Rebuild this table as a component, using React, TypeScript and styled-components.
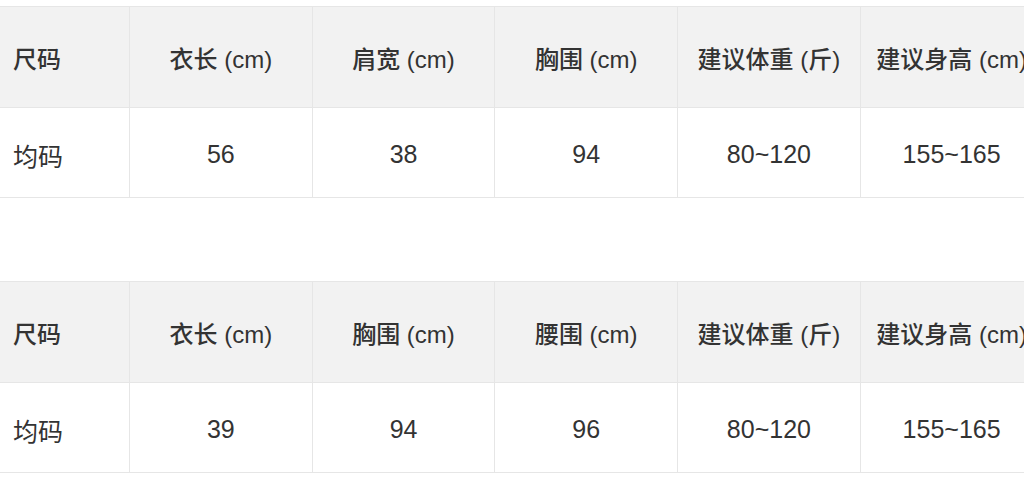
import styled, { createGlobalStyle } from 'styled-components';

const GlobalStyle = createGlobalStyle`
  html, body {
    margin: 0;
    padding: 0;
    background: #ffffff;
    overflow: hidden;
  }
  body {
    font-family: "Liberation Sans", "Noto Sans CJK SC", sans-serif;
    color: #333333;
  }
`;

const tables = [
  {
    headers: ['尺码', '衣长 (cm)', '肩宽 (cm)', '胸围 (cm)', '建议体重 (斤)', '建议身高 (cm)'],
    values: ['均码', '56', '38', '94', '80~120', '155~165'],
  },
  {
    headers: ['尺码', '衣长 (cm)', '胸围 (cm)', '腰围 (cm)', '建议体重 (斤)', '建议身高 (cm)'],
    values: ['均码', '39', '94', '96', '80~120', '155~165'],
  },
];

const Page = styled.div`
  display: flex;
  flex-direction: column;
  gap: 83px;
  padding-top: 6px;
  width: 1044px;
`;

const SizeTable = styled.div`
  display: grid;
  grid-template-columns: 130px repeat(5, 182.7px);
  border-top: 1px solid #e6e6e6;
`;

const Cell = styled.div<{ $head?: boolean; $first?: boolean }>`
  box-sizing: border-box;
  display: flex;
  align-items: center;
  justify-content: ${(p) => (p.$first ? 'flex-start' : 'center')};
  padding-left: ${(p) => (p.$first ? '13px' : '0')};
  padding-top: ${(p) => (p.$head ? '0' : '4px')};
  height: ${(p) => (p.$head ? '101px' : '90px')};
  background: ${(p) => (p.$head ? '#f2f2f2' : '#ffffff')};
  border-right: 1px solid #e6e6e6;
  border-bottom: 1px solid #e6e6e6;
  font-size: ${(p) => (p.$head ? '24px' : '25px')};
  font-weight: ${(p) => (p.$head ? 500 : 400)};
  color: #333333;
  white-space: nowrap;
`;

export default function App() {
  return (
    <>
      <GlobalStyle />
      <Page>
        {tables.map((t, ti) => (
          <SizeTable key={ti}>
            {t.headers.map((h, i) => (
              <Cell key={'h' + i} $head $first={i === 0}>
                {h}
              </Cell>
            ))}
            {t.values.map((v, i) => (
              <Cell key={'v' + i} $first={i === 0}>
                {v}
              </Cell>
            ))}
          </SizeTable>
        ))}
      </Page>
    </>
  );
}
